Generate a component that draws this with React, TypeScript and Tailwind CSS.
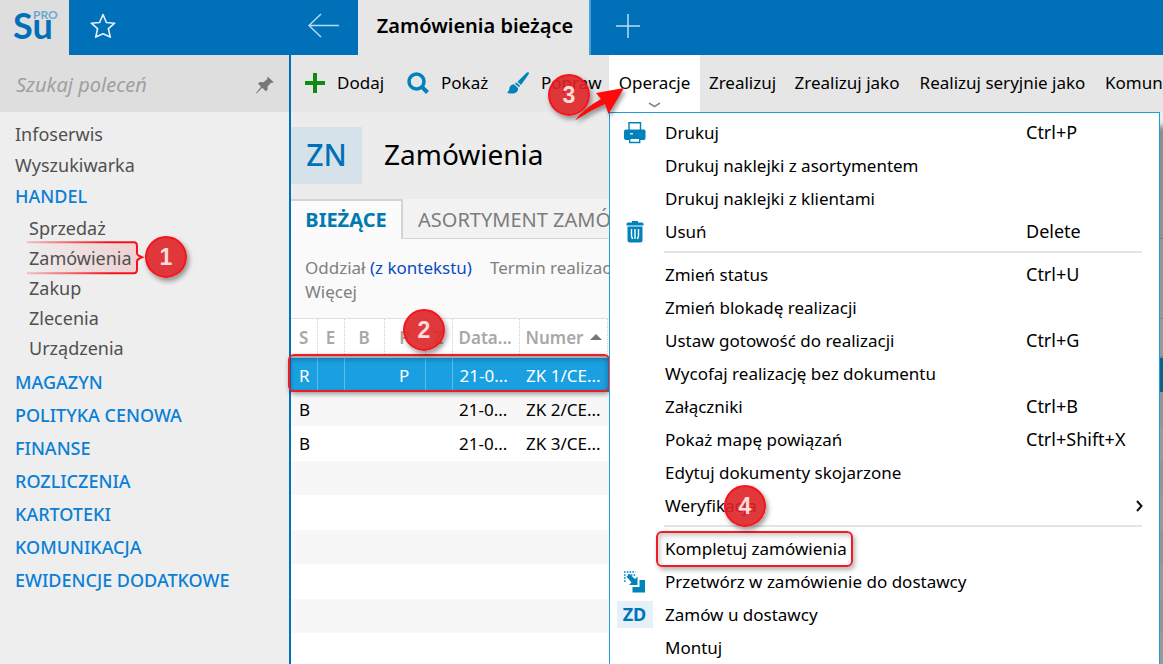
import type { ReactNode } from 'react'

type MenuEntry = {
    label: string
    shortcut?: string
    icon?: ReactNode
    submenu?: boolean
    badge?: string
    framed?: boolean
}

type Order = {
    status: string
    flag: string
    date: string
    number: string
}

const PrinterIcon = () => (
    <svg width="22" height="22" viewBox="0 0 22 22" fill="#0083bb">
        <path d="M5 .7h11.500v9H5z" fill="#fff" stroke="#0083bb" strokeWidth="1.400" />
        <path d="M2 7.500h18q1.500 0 1.500 1.700V16q0 2-1.500 2H2q-2 0-2-2V9.200Q0 7.500 2 7.500z" />
        <path d="M5.700 16.200h10v4.300h-10z" fill="#fff" stroke="#0083bb" strokeWidth="1.400" />
        <path d="M6 11.200h3v1.200H6z" fill="#fff" />
    </svg>
)

const TrashIcon = () => (
    <svg width="18" height="22" viewBox="0 0 18 22" fill="#0083bb">
        <path d="M6 0h6v1.500h4q1.500 0 1.500 1.500v1.500H.5V3Q.5 1.500 2 1.500h4z" />
        <path d="M1.500 5.500h15V19q0 2.500-2.500 2.500H4q-2.500 0-2.500-2.500z" />
        <path d="M5.500 8v7l1 3M9 8v10M12.500 8v7l-1 3" fill="none" stroke="#fff" strokeWidth="1.400" />
    </svg>
)

const ConvertIcon = () => (
    <svg width="22" height="22" viewBox="0 0 22 22" fill="#0083bb">
        <path d="M0 1h11.500M0 4h2M0 7h2M0 10h2M4 4h7.500" stroke="#0083bb" strokeWidth="1.600" strokeDasharray="1.600 1.200" />
        <path d="M2.500 5.500L5.500 3l5.500 5 2.500-2.500V14H5l2.500-2.500z" />
        <path d="M15.500 9H21v12.500H8.500V16h7z" />
    </svg>
)

const menuGroups: MenuEntry[][] = [
    [
        { label: 'Drukuj', shortcut: 'Ctrl+P', icon: <PrinterIcon /> },
        { label: 'Drukuj naklejki z asortymentem' },
        { label: 'Drukuj naklejki z klientami' },
        { label: 'Usuń', shortcut: 'Delete', icon: <TrashIcon /> },
    ],
    [
        { label: 'Zmień status', shortcut: 'Ctrl+U' },
        { label: 'Zmień blokadę realizacji' },
        { label: 'Ustaw gotowość do realizacji', shortcut: 'Ctrl+G' },
        { label: 'Wycofaj realizację bez dokumentu' },
        { label: 'Załączniki', shortcut: 'Ctrl+B' },
        { label: 'Pokaż mapę powiązań', shortcut: 'Ctrl+Shift+X' },
        { label: 'Edytuj dokumenty skojarzone' },
        { label: 'Weryfikacja', submenu: true, badge: '4' },
    ],
    [
        { label: 'Kompletuj zamówienia', framed: true },
        { label: 'Przetwórz w zamówienie do dostawcy', icon: <ConvertIcon /> },
        {
            label: 'Zamów u dostawcy',
            icon: <span className="flex h-[27px] w-9 items-center justify-center bg-[#e5f0f7] text-[18px] font-bold text-[#0072bc]">ZD</span>,
        },
        { label: 'Montuj' },
    ],
]

const orders: Order[] = [
    { status: 'R', flag: 'P', date: '21-0...', number: 'ZK 1/CE...' },
    { status: 'B', flag: '', date: '21-0...', number: 'ZK 2/CE...' },
    { status: 'B', flag: '', date: '21-0...', number: 'ZK 3/CE...' },
]

const modules = ['MAGAZYN', 'POLITYKA CENOWA', 'FINANSE', 'ROZLICZENIA', 'KARTOTEKI', 'KOMUNIKACJA', 'EWIDENCJE DODATKOWE']

const tradeItems = ['Sprzedaż', 'Zamówienia', 'Zakup', 'Zlecenia', 'Urządzenia']

const Step = ({ value, className }: { value: string; className: string }) => (
    <span
        className={`pointer-events-none absolute z-20 flex h-[42px] w-[42px] items-center justify-center rounded-full border-2 border-[#f5141c] bg-[#de2226]/90 font-['Liberation_Sans',sans-serif] text-[23px] font-bold text-[#ffdcdc] shadow-[2px_3px_5px_rgba(0,0,0,0.4)] ${className}`}
    >
        {value}
    </span>
)

const TopBar = () => (
    <header className="flex h-[55px] shrink-0 bg-[#0070b9]">
        <a href="#start" aria-label="Su PRO" className="relative w-[69px] bg-[#dedede] text-[#0070b9]">
            <span className="absolute left-[13px] top-[5px] font-['Lato',sans-serif] text-[36px] font-bold leading-[40px]">Su</span>
            <span className="absolute left-[33px] top-[9px] font-['Lato',sans-serif] text-[12px] font-bold leading-[12px] text-[#6ba9cf]">PRO</span>
        </a>
        <div className="flex w-[289px] items-center justify-between pb-[3px] pl-[21px] pr-[18px]">
            <button aria-label="Ulubione">
                <svg width="26" height="26" viewBox="0 0 26 26" fill="none" stroke="#e6f3fb" strokeWidth="1.600" strokeLinejoin="round">
                    <path d="M13 1.500l3.400 8 8.300.7-6.300 5.500 1.900 8.400L13 20.800l-7.300 3.300 1.900-8.400-6.300-5.500 8.300-.7z" />
                </svg>
            </button>
            <button aria-label="Wstecz">
                <svg width="32" height="26" viewBox="0 0 32 26" fill="none" stroke="#b8dcf3" strokeWidth="1.500">
                    <path d="M31 12.500H1M13 1L1 12.500 13 24" />
                </svg>
            </button>
        </div>
        <button className="w-[233px] border-r-2 border-[#4a9fd4] bg-[#e6e6e6] pb-[3px] pl-[3px] text-[20px] font-semibold text-black">Zamówienia bieżące</button>
        <button aria-label="Nowa karta" className="pb-[3px] pl-[25px]">
            <svg width="24" height="24" viewBox="0 0 24 24" fill="none" stroke="#b8dcf3" strokeWidth="1.500">
                <path d="M12 0v24M0 12h24" />
            </svg>
        </button>
    </header>
)

const Sidebar = () => (
    <aside className="flex w-[291px] shrink-0 flex-col border-r-2 border-[#0070b9] bg-[#eeeeee]">
        <div className="flex h-[57px] items-center bg-[#dedede] pl-4 pr-[15px] pt-[3px]">
            <input
                aria-label="Szukaj poleceń"
                placeholder="Szukaj poleceń"
                className="min-w-0 flex-1 bg-transparent text-[20px] italic outline-none placeholder:text-[#a0a0a0]"
            />
            <button aria-label="Przypnij">
                <svg width="18" height="18" viewBox="0 0 18 18" fill="#777">
                    <path d="M11.500.5l6 5.500-1.500 1-1-.3-3.500 3.800.2 3-1.800 1.800-3.700-3.500L.5 17.500 0 17l5-6.200L2 7.500 4 6l3.500.2L11.300 3z" />
                </svg>
            </button>
        </div>
        <nav className="pt-[7px] text-[18px]">
            <ul className="text-[#505050]">
                <li className="flex h-[31px] items-center px-[15px]"><a href="#infoserwis">Infoserwis</a></li>
                <li className="flex h-[31px] items-center px-[15px]"><a href="#wyszukiwarka">Wyszukiwarka</a></li>
                <li className="flex h-[31px] items-center px-[15px] font-medium text-[#0a7fd6]"><a href="#handel">HANDEL</a></li>
            </ul>
            <ul className="pb-[3px] pt-[1px] text-[#505050]">
                {tradeItems.map((item) => (
                    <li key={item} className="relative flex h-[30px] items-center px-[29px]">
                        {item === 'Zamówienia' && (
                            <>
                                <svg className="absolute left-[26px] top-[-1px] overflow-visible" width="118" height="32" viewBox="0 0 118 32" fill="none">
                                    <defs>
                                        <linearGradient id="fade" gradientUnits="userSpaceOnUse" x1="0" y1="0" x2="118" y2="0">
                                            <stop offset="0" stopColor="#f5141c" stopOpacity="0.2" />
                                            <stop offset="0.7" stopColor="#f5141c" />
                                        </linearGradient>
                                        <linearGradient id="tint" x1="0" y1="0" x2="1" y2="0">
                                            <stop offset="0" stopColor="#f5141c" stopOpacity="0" />
                                            <stop offset="1" stopColor="#f5141c" stopOpacity="0.14" />
                                        </linearGradient>
                                    </defs>
                                    <path d="M0 0h108q4 0 4 4v8l4 4-4 4v7q0 4-4 4H0z" fill="url(#tint)" />
                                    <path d="M1 .2h107q3 0 3 4v7q0 2 5 4-5 2-5 4v8q0 4-3 4H1" stroke="url(#fade)" strokeWidth="2" />
                                </svg>
                                <Step value="1" className="left-[145px] top-[-7px]" />
                            </>
                        )}
                        <a href={`#${item}`} className="relative">{item}</a>
                    </li>
                ))}
            </ul>
            <ul className="font-medium text-[#0a7fd6]">
                {modules.map((item) => (
                    <li key={item} className="flex h-[33px] items-center px-[15px]"><a href={`#${item}`}>{item}</a></li>
                ))}
            </ul>
        </nav>
    </aside>
)

const OperationsMenu = () => (
    <div className="absolute left-0 top-full z-10 w-[551px] border border-[#1d9fe0] bg-white pb-8 pt-[3px] shadow-[8px_14px_5px_rgba(0,0,0,0.4)]">
        {menuGroups.map((group, index) => (
            <ul key={index}>
                {index > 0 && <li className="ml-[54px] mr-[17px] h-[10px] pt-[3px]"><hr className="border-t-2 border-[#e4e4e4]" /></li>}
                {group.map((entry) => (
                    <li key={entry.label} className="relative">
                        <button className="flex h-[33px] w-full items-center pr-[14px] text-left">
                            <span className="ml-[6px] mr-3 flex w-[37px] shrink-0 justify-center">{entry.icon}</span>
                            <span className="flex-1">{entry.label}</span>
                            {entry.shortcut && <span className="w-[119px] text-[18px]">{entry.shortcut}</span>}
                            {entry.submenu && (
                                <svg width="10" height="12" viewBox="0 0 10 12" fill="none" stroke="#111" strokeWidth="2">
                                    <path d="M2 1l4.500 5L2 11" />
                                </svg>
                            )}
                        </button>
                        {entry.badge && <Step value={entry.badge} className="left-[114px] top-[-4px]" />}
                        {entry.framed && (
                            <span className="pointer-events-none absolute left-[46px] top-[-1px] h-[36px] w-[197px] rounded-[6px] border-2 border-[#ee1c24] shadow-[2px_3px_5px_rgba(0,0,0,0.3),inset_2px_3px_5px_rgba(0,0,0,0.2)]" />
                        )}
                    </li>
                ))}
            </ul>
        ))}
    </div>
)

const Toolbar = () => (
    <div className="flex h-[57px] shrink-0 whitespace-nowrap bg-[#e6e6e6] text-[17px] text-black">
        <button className="flex w-[102px] shrink-0 items-center gap-3 pb-[2px] pl-[14px]">
            <svg width="20" height="20" viewBox="0 0 20 20" fill="#108a10"><path d="M8 0h4v8h8v4h-8v8H8v-8H0V8h8z" /></svg>
            Dodaj
        </button>
        <button className="flex w-[101px] shrink-0 items-center gap-3 pb-[2px] pl-[14px]">
            <svg width="22" height="22" viewBox="0 0 22 22" fill="none" stroke="#0083bb">
                <circle cx="9.500" cy="9.500" r="7.500" strokeWidth="3.500" />
                <path d="M15 15l5.500 5.500" strokeWidth="4" />
            </svg>
            Pokaż
        </button>
        <button className="relative flex w-[115px] shrink-0 items-center gap-3 pb-[2px] pl-[13px]">
            <svg width="22" height="22" viewBox="0 0 22 22" fill="#0083bb">
                <path d="M21.500.3q.8.700 0 2.200L14 13l-3.500-3.300L19.500.8q1.200-1 2-.5z" />
                <path d="M9.500 10.500l3.500 3.300q-.5 1-1 1.500L8 11.700q.5-.7 1.500-1.200z" />
                <path d="M7 12.200l4 3.700q.5 4-3.500 5.300-3.500 1-7.500-.4 2-.8 2.200-3.500.3-4.600 4.800-5.100z" />
            </svg>
            Popraw
            <Step value="3" className="left-[54px] top-[19px]" />
        </button>
        <div className="relative w-[91px] shrink-0 bg-white">
            <button className="flex h-full w-full items-center justify-center pb-[2px]">Operacje</button>
            <svg className="pointer-events-none absolute bottom-[4px] left-[39px]" width="13" height="6" viewBox="0 0 13 6" fill="none" stroke="#888" strokeWidth="1.500">
                <path d="M1 1l5.500 3.500L12 1" />
            </svg>
            <OperationsMenu />
            <svg className="pointer-events-none absolute left-[-34px] top-[30px] z-30 drop-shadow-[2px_3px_2px_rgba(0,0,0,0.4)]" width="50" height="38" viewBox="0 0 50 38" fill="#ff0a0a">
                <path d="M49 3L21 8l5 6Q8 24 0 35.500q15-10 30-16.500l3.500 10z" />
            </svg>
        </div>
        <button className="w-[85px] shrink-0 pb-[2px]">Zrealizuj</button>
        <button className="w-[124px] shrink-0 pb-[2px]">Zrealizuj jako</button>
        <button className="w-[187px] shrink-0 pb-[2px]">Realizuj seryjnie jako</button>
        <button className="shrink-0 pb-[2px] pl-[9px]">Komunikacja</button>
    </div>
)

const OrdersTable = () => (
    <div className="relative text-[17px]">
        <table className="w-full table-fixed border-collapse whitespace-nowrap text-left">
            <colgroup>
                <col className="w-[26px]" />
                <col className="w-[27px]" />
                <col className="w-[40px]" />
                <col className="w-[41px]" />
                <col className="w-[27px]" />
                <col className="w-[67px]" />
                <col className="w-[88px]" />
                <col />
            </colgroup>
            <thead className="bg-white text-[#a8a8a8]">
                <tr className="h-[38px] border-b-2 border-t border-[#dedede]">
                    {['S', 'E', 'B', 'P', 'Z'].map((name) => (
                        <th key={name} className="border-r border-dotted border-r-[#d0d0d0] p-0 text-center font-semibold">{name}</th>
                    ))}
                    <th className="border-r border-dotted border-r-[#d0d0d0] p-0 pl-[6px] font-semibold">Data...</th>
                    <th className="border-r border-dotted border-r-[#d0d0d0] p-0 pl-[6px] font-semibold">
                        <span className="flex items-center gap-[7px]">
                            Numer
                            <svg width="12" height="6" viewBox="0 0 12 6" fill="#777"><path d="M6 0l6 6H0z" /></svg>
                        </span>
                    </th>
                    <th className="p-0" />
                </tr>
            </thead>
            <tbody>
                {orders.map((order, index) => (
                    <tr
                        key={order.number}
                        className={index === 0 ? 'h-[35px] bg-[#1a9fe0] text-white' : index % 2 ? 'h-[34px] bg-[#f7f7f7]' : 'h-[35px] bg-white'}
                    >
                        <td className={`p-0 pl-2 pt-[2px] ${index === 0 ? 'border-r border-[#5cbcea]' : ''}`}>{order.status}</td>
                        <td className={`p-0 ${index === 0 ? 'border-r border-[#5cbcea]' : ''}`} />
                        <td className="p-0" />
                        <td className={`p-0 pt-[2px] text-center ${index === 0 ? 'border-r border-[#5cbcea]' : ''}`}>{order.flag}</td>
                        <td className={`p-0 ${index === 0 ? 'border-r border-[#5cbcea]' : ''}`} />
                        <td className="p-0 pl-[7px] pt-[2px]">{order.date}</td>
                        <td className="p-0 pl-[7px] pt-[2px]">{order.number}</td>
                        <td className="p-0" />
                    </tr>
                ))}
                {[3, 4, 5, 6, 7, 8].map((index) => (
                    <tr key={index} className={index % 2 ? 'h-[34px] bg-[#f7f7f7]' : 'h-[35px] bg-white'}>
                        <td colSpan={8} className="p-0" />
                    </tr>
                ))}
            </tbody>
        </table>
        <span className="pointer-events-none absolute left-[-3px] top-[36px] h-[38px] w-[322px] rounded-[6px] border-2 border-[#ee1c24] shadow-[1px_2px_5px_rgba(0,0,0,0.4),inset_0_3px_5px_rgba(0,0,0,0.3)]" />
        <Step value="2" className="left-[112px] top-[-9px]" />
    </div>
)

const App = () => {
    return (
        <div className="flex h-screen flex-col overflow-hidden bg-white font-['Noto_Sans','Open_Sans',sans-serif]">
            <TopBar />
            <div className="flex min-h-0 flex-1">
                <Sidebar />
                <main className="flex min-w-0 flex-1 flex-col bg-white">
                    <Toolbar />
                    <div className="flex h-[87px] shrink-0 items-center bg-[#ececec]">
                        <span className="flex h-[57px] w-[71px] items-center justify-center bg-[#d6e2ea] pb-[3px] text-[30px] font-medium text-[#0070b9]">ZN</span>
                        <h1 className="pb-[3px] pl-[22px] text-[28px] text-black">Zamówienia</h1>
                    </div>
                    <div className="flex h-[40px] shrink-0 overflow-hidden whitespace-nowrap bg-[#f2f2f2] text-[20px]">
                        <button className="w-[112px] shrink-0 border-r-2 border-t-2 border-[#d4d4d4] bg-[#fbfbfb] font-bold text-[#007ab0]">BIEŻĄCE</button>
                        <button className="flex-1 border-b border-[#d4d4d4] pl-[15px] pt-[2px] text-left text-[#7c7c7c]">ASORTYMENT ZAMÓWIEŃ</button>
                    </div>
                    <div className="h-[79px] shrink-0 bg-[#fafafa] pl-[14px] pt-[17px] text-[17px] leading-[24px] text-[#808080]">
                        <div className="flex gap-[18px]">
                            <span>Oddział <a href="#oddzial" className="text-[#0a4cc0]">(z kontekstu)</a></span>
                            <span>Termin realizacji</span>
                        </div>
                        <a href="#wiecej">Więcej</a>
                    </div>
                    <OrdersTable />
                </main>
            </div>
        </div>
    )
}

export default App
